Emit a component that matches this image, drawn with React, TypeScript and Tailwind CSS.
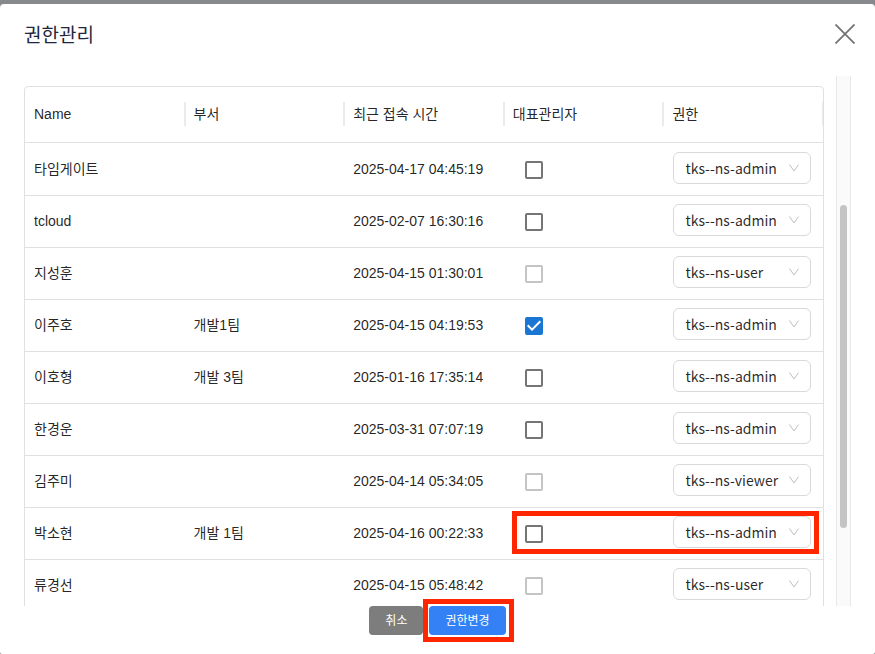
import { useState } from 'react';

type Role = 'tks--ns-admin' | 'tks--ns-user' | 'tks--ns-viewer';

interface Member {
  name: string;
  team: string;
  lastAccess: string;
  owner: boolean;
  locked: boolean;
  role: Role;
  highlighted?: boolean;
}

const ROLES: Role[] = ['tks--ns-admin', 'tks--ns-user', 'tks--ns-viewer'];

const HEADERS = ['Name', '부서', '최근 접속 시간', '대표관리자', '권한'];

const MEMBERS: Member[] = [
  { name: '타임게이트', team: '', lastAccess: '2025-04-17 04:45:19', owner: false, locked: false, role: 'tks--ns-admin' },
  { name: 'tcloud', team: '', lastAccess: '2025-02-07 16:30:16', owner: false, locked: false, role: 'tks--ns-admin' },
  { name: '지성훈', team: '', lastAccess: '2025-04-15 01:30:01', owner: false, locked: true, role: 'tks--ns-user' },
  { name: '이주호', team: '개발1팀', lastAccess: '2025-04-15 04:19:53', owner: true, locked: false, role: 'tks--ns-admin' },
  { name: '이호형', team: '개발 3팀', lastAccess: '2025-01-16 17:35:14', owner: false, locked: false, role: 'tks--ns-admin' },
  { name: '한경운', team: '', lastAccess: '2025-03-31 07:07:19', owner: false, locked: false, role: 'tks--ns-admin' },
  { name: '김주미', team: '', lastAccess: '2025-04-14 05:34:05', owner: false, locked: true, role: 'tks--ns-viewer' },
  { name: '박소현', team: '개발 1팀', lastAccess: '2025-04-16 00:22:33', owner: false, locked: false, role: 'tks--ns-admin', highlighted: true },
  { name: '류경선', team: '', lastAccess: '2025-04-15 05:48:42', owner: false, locked: true, role: 'tks--ns-user' },
];

function OwnerCheckbox({ member }: { member: Member }) {
  const [checked, setChecked] = useState(member.owner);
  return (
    <label className="relative flex size-[18px]">
      <input
        type="checkbox"
        aria-label={`${member.name} 대표관리자`}
        checked={checked}
        disabled={member.locked}
        onChange={(e) => setChecked(e.target.checked)}
        className="peer size-[18px] appearance-none rounded-xs border-2 border-[#757575] bg-white checked:border-[#1976d2] checked:bg-[#1976d2] disabled:border-[#c4c4c4]"
      />
      <svg viewBox="3 3 18 18" className="pointer-events-none absolute inset-0 hidden size-[18px] peer-checked:block" aria-hidden="true">
        <path fill="#fff" d="M10 17l-5-5 1.41-1.41L10 14.17l7.59-7.59L19 8z" />
      </svg>
    </label>
  );
}

function RoleSelect({ member }: { member: Member }) {
  const [role, setRole] = useState<Role>(member.role);
  return (
    <div className="relative">
      <select
        aria-label={`${member.name} 권한`}
        value={role}
        onChange={(e) => setRole(e.target.value as Role)}
        className="block h-8 w-full appearance-none rounded-md border border-[#d9d9d9] bg-white pr-6 pl-[11px] font-['Noto_Sans_CJK_KR',sans-serif] text-sm text-black/85"
      >
        {ROLES.map((r) => (
          <option key={r} value={r}>{r}</option>
        ))}
      </select>
      <svg viewBox="0 0 10 8" className="pointer-events-none absolute top-3 right-3 h-2 w-[10px]" fill="none" stroke="#bfbfbf" aria-hidden="true">
        <path d="M0.5 0.5L5 7L9.5 0.5" />
      </svg>
    </div>
  );
}

function MemberRow({ member }: { member: Member }) {
  const cell = 'h-[52px] border-b border-[#e0e0e0] pb-[2px] pl-[9px] align-middle';
  return (
    <tr className="relative first:[&>td]:h-[53px] first:[&>td]:pt-px">
      <td className={cell}>{member.name}</td>
      <td className={cell}>{member.team}</td>
      <td className={cell}>{member.lastAccess}</td>
      <td className="h-[52px] border-b border-[#e0e0e0] pl-[21px] align-middle">
        <OwnerCheckbox member={member} />
      </td>
      <td className="h-[52px] border-b border-[#e0e0e0] pr-3 pb-[3px] pl-[10px] align-middle">
        <RoleSelect member={member} />
        {member.highlighted && (
          <span className="pointer-events-none absolute top-[3px] right-1 bottom-[6px] left-[61%] border-5 border-[#ff2600]" />
        )}
      </td>
    </tr>
  );
}

export default function App() {
  return (
    <div className="flex h-screen flex-col bg-[#88898c] pt-1 font-['Liberation_Sans','Noto_Sans_CJK_KR',sans-serif] text-sm text-black/87">
      <div role="dialog" aria-labelledby="dialog-title" className="flex min-h-0 flex-1 flex-col rounded-t rounded-b-xs bg-white px-6">
        <header className="mb-3 flex h-[60px] shrink-0 items-center justify-between">
          <h1 id="dialog-title" className="pt-[3px] text-[19px] leading-7 text-[#1f2740]">권한관리</h1>
          <button type="button" aria-label="닫기" className="-mr-1">
            <svg viewBox="0 0 20 20" className="size-5" stroke="#737373" strokeWidth="1.8" aria-hidden="true">
              <path d="M0.5 0.5L19.5 19.5M19.5 0.5L0.5 19.5" />
            </svg>
          </button>
        </header>

        <main className="flex min-h-0 flex-1 gap-3 overflow-hidden">
          <div className="min-w-0 flex-1 pt-[10px]">
            <div className="overflow-hidden rounded-t border border-[#e0e0e0]">
              <table className="w-full table-fixed border-separate border-spacing-0">
                <thead>
                  <tr>
                    {HEADERS.map((header) => (
                      <th key={header} scope="col" className="h-14 border-b border-[#e0e0e0] pb-px pl-[9px] text-left font-normal">
                        <div className="-mr-px flex items-center justify-between">
                          <span>{header}</span>
                          <span className="h-6 w-0.5 bg-[#ebebeb]" />
                        </div>
                      </th>
                    ))}
                  </tr>
                </thead>
                <tbody>
                  {MEMBERS.map((member) => (
                    <MemberRow key={member.name} member={member} />
                  ))}
                </tbody>
              </table>
            </div>
          </div>

          <div aria-hidden="true" className="flex w-[15px] flex-col border-x border-[#e8e8e8] bg-[#fafafa] px-[3px]">
            <div className="flex-[129]" />
            <div className="flex-[323] rounded-full bg-[#c4c4c4]" />
            <div className="flex-[78]" />
          </div>
        </main>

        <footer className="flex shrink-0 justify-center gap-[6px] pb-[19px] text-xs text-white">
          <button type="button" className="h-[29px] rounded bg-[#7d7d7d] px-4 pt-px">취소</button>
          <div className="relative">
            <button type="button" className="h-[29px] rounded bg-[#3381f5] px-4 pt-px">권한변경</button>
            <span className="pointer-events-none absolute -top-[7px] -right-2 -bottom-[7px] -left-[6px] border-5 border-[#ff2600]" />
          </div>
        </footer>
      </div>
    </div>
  );
}
